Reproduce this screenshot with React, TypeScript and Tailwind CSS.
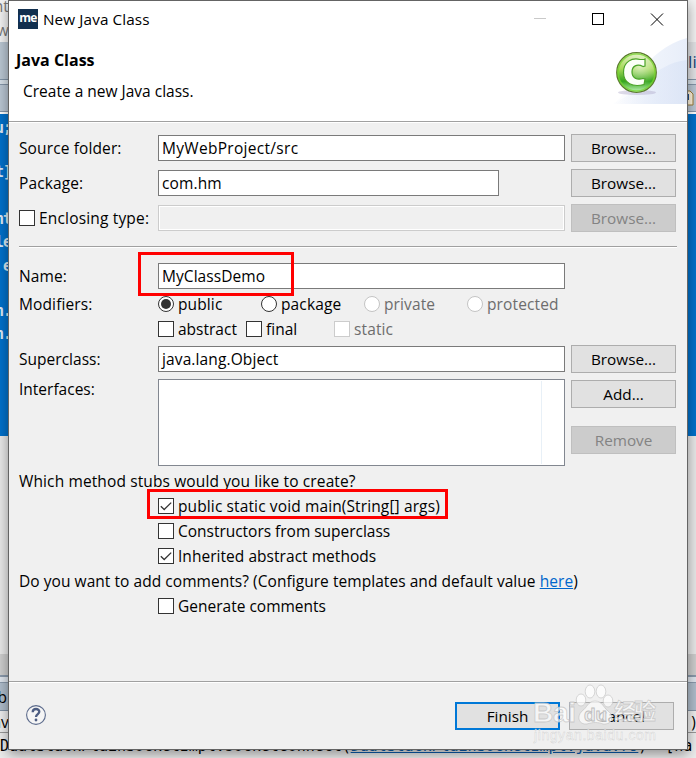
import type { ReactNode } from 'react'
import clsx from 'clsx'

function Label({ children, className }: { children: ReactNode; className?: string }) {
  return <span className={clsx('whitespace-nowrap', className)}>{children}</span>
}

function Field({ value, className }: { value?: string; className?: string }) {
  return (
    <div className={clsx('flex h-[26px] items-center border border-[#7a7a7a] bg-white pl-[3px]', className)}>
      {value}
    </div>
  )
}

function Button({ label, disabled, primary }: { label: string; disabled?: boolean; primary?: boolean }) {
  return (
    <button
      className={clsx(
        'flex h-7 w-[105px] items-center justify-center text-[15.3px] tracking-normal',
        disabled && 'border border-[#bfbfbf] bg-[#cccccc] text-[#838383]',
        primary && 'border-2 border-[#0078d7] bg-[#e1e1e1]',
        !disabled && !primary && 'border border-[#adadad] bg-[#e1e1e1]'
      )}
    >
      {label}
    </button>
  )
}

type CheckboxProps = { label: string; checked?: boolean; disabled?: boolean; className?: string }

function Checkbox({ label, checked, disabled, className }: CheckboxProps) {
  return (
    <div className={clsx('flex h-[25px] items-center gap-1', disabled && 'text-[#6d6d6d]', className)}>
      <span className={clsx('h-4 w-4 shrink-0 border bg-white', disabled ? 'border-[#cccccc]' : 'border-[#333333]')}>
        {checked && (
          <svg viewBox="0 0 14 14" className="h-3.5 w-3.5">
            <path d="M1.8 7.2 L5.2 10.500 L12.200 3.600" fill="none" stroke="#333" strokeWidth="1.3" />
          </svg>
        )}
      </span>
      <Label>{label}</Label>
    </div>
  )
}

function Radio({ label, checked, disabled }: { label: string; checked?: boolean; disabled?: boolean }) {
  return (
    <div className={clsx('flex w-[103px] items-center gap-1', disabled && 'text-[#6d6d6d]')}>
      <span
        className={clsx(
          'flex h-4 w-4 shrink-0 items-center justify-center rounded-full border bg-white',
          disabled ? 'border-[#c4c4c4]' : 'border-[#333333]'
        )}
      >
        {checked && <span className="h-2.5 w-2.5 rounded-full bg-[#333333]" />}
      </span>
      <Label>{label}</Label>
    </div>
  )
}

function Separator({ className }: { className?: string }) {
  return <div className={clsx('h-0.5 border-t border-b border-t-[#a0a0a0] border-b-white', className)} />
}

function ClassBanner() {
  return (
    <svg viewBox="0 0 75 67" className="h-[67px] w-[75px]">
      <defs>
        <linearGradient id="wave" x1="0" x2="1">
          <stop offset="0" stopColor="#dde6f7" stopOpacity="0" />
          <stop offset="0.65" stopColor="#dde6f7" stopOpacity="0.85" />
          <stop offset="1" stopColor="#d8e2f5" />
        </linearGradient>
        <linearGradient id="ball" x1="0" y1="0" x2="0" y2="1">
          <stop offset="0" stopColor="#e0efc0" />
          <stop offset="0.4" stopColor="#a5d957" />
          <stop offset="0.72" stopColor="#35a51d" />
          <stop offset="0.9" stopColor="#91d982" />
          <stop offset="1" stopColor="#c4f7bb" />
        </linearGradient>
        <radialGradient id="shine" cx="0.6" cy="0.35" r="0.5">
          <stop offset="0" stopColor="#fff" stopOpacity="0.55" />
          <stop offset="1" stopColor="#fff" stopOpacity="0" />
        </radialGradient>
      </defs>
      <path d="M0 67 C18 58 32 12 75 1 V67 Z" fill="url(#wave)" opacity="0.6" />
      <path d="M0 67 C30 55 40 27 75 23 V67 Z" fill="url(#wave)" opacity="0.7" />
      <ellipse cx="25" cy="55.500" rx="19" ry="2.5" fill="#aaa3c5" opacity="0.4" />
      <circle cx="24.500" cy="35.500" r="19.800" fill="url(#ball)" stroke="#5c7b2f" strokeWidth="1.2" />
      <circle cx="24.500" cy="35.500" r="18.500" fill="none" stroke="#76d62f" strokeWidth="1.4" opacity="0.75" />
      <circle cx="24.500" cy="35.500" r="18" fill="url(#shine)" />
      <path
        d="M32 22.500 L33 22 V29 L31 29.500 C25 26.500 20 29 20 35 C20 41 25 43.500 31 41.500 L33 42 L32 47.500 C21 50.500 11.500 46.500 11.500 35.500 C11.500 24.500 20 20.500 28 22.500 Z"
        fill="#fbfff7"
        stroke="#4aa326"
        strokeWidth="1.2"
      />
    </svg>
  )
}

function TitleBar() {
  return (
    <div className="flex h-9 items-center pl-[9px] text-[15.3px] tracking-[0.1px]">
      <span className="flex h-5 w-5 items-center justify-center bg-[#12304f] pb-0.5 text-[12px] font-bold tracking-[-0.8px] text-white">
        me
      </span>
      <span className="ml-[5px]">New Java Class</span>
      <svg viewBox="0 0 130 13" className="mt-px mr-[23px] ml-auto h-[13px] w-[130px]" shapeRendering="crispEdges">
        <path d="M0 5.500 H12" stroke="#c9c9c9" />
        <rect x="58.500" y="0.500" width="11" height="11" fill="none" stroke="#000" />
        <path d="M117 0.500 L129 12.500 M129 0.500 L117 12.500" stroke="#000" shapeRendering="auto" />
      </svg>
    </div>
  )
}

function Header() {
  return (
    <div className="flex h-[84px] justify-between">
      <div>
        <div className="mt-[9px] ml-[7px] h-7 text-[16px] leading-7 font-bold tracking-normal">Java Class</div>
        <div className="mt-[3px] ml-[14px] h-7 leading-7 tracking-normal">Create a new Java class.</div>
      </div>
      <ClassBanner />
    </div>
  )
}

function Watermark() {
  return (
    <div className="absolute top-[682px] left-[524px] h-16 w-[130px] font-['Liberation_Sans','Noto_Sans_CJK_SC',sans-serif] tracking-normal">
      <svg viewBox="0 0 130 64" className="h-16 w-[130px]">
        <g fill="#ffffff" fillOpacity="0.7" stroke="#c0c0c0" strokeWidth="0.8" strokeOpacity="0.75">
          <ellipse cx="48" cy="17" rx="4.800" ry="6" />
          <ellipse cx="57" cy="8.500" rx="4.800" ry="6.500" />
          <ellipse cx="68" cy="8.500" rx="4.800" ry="6.500" />
          <ellipse cx="75" cy="18" rx="4.800" ry="6" />
          <path d="M62 18 C55 18 54 25 49 28 C43 34 46 42 54 41 C60 39 65 39 70 41 C79 42 82 33 75 28 C70 24 69 18 62 18 Z" />
          <text x="0" y="39" fontSize="28" fontWeight="bold" textLength="43">Bai</text>
          <text x="81" y="36" fontSize="22" fontWeight="bold" textLength="42">经验</text>
          <text x="1" y="57" fontSize="14" textLength="122" strokeWidth="0.4">jingyan.baidu.com</text>
        </g>
        <text x="51" y="38" fontSize="19" fontWeight="bold" fill="#eeeeee" stroke="#bcbcbc" strokeWidth="0.8" textLength="23">du</text>
      </svg>
    </div>
  )
}

// what shows of the IDE on one side of the dialog
function IdeStrip({ side }: { side: 'left' | 'right' }) {
  const left = side === 'left'
  const code = [
    [4, 'u;'],
    [48, 't]'],
    [95, 'nt'],
    [118, 'le'],
    [142, 'e'],
    [187, 'n.'],
    [210, 'n.'],
  ] as const
  return (
    <div className="flex w-[9px] flex-col overflow-hidden">
      <div className="flex h-[42px] flex-col items-end justify-between bg-[#f3f3f3] pb-0.5 text-[#777]">
        {left && (
          <>
            <span className="h-4 leading-3">nt</span>
            <span className="h-4 leading-3">ow</span>
          </>
        )}
      </div>
      <div className={clsx('h-[38px] border-b border-[#8295a8]', left ? 'bg-[#b9c6d2]' : 'bg-[#e2e3e5]')}>
        {!left && <div className="pt-2.5 pl-px text-[17px] text-[#174577]">li</div>}
      </div>
      <div className="h-1 bg-[#d7e0e8]" />
      <div className="h-[28px] border-t border-b border-[#8495a8] bg-[#b9c6d3]">
        {!left && (
          <svg viewBox="0 0 9 26" className="h-[26px] w-[9px]">
            <path d="M-2 6 H3 L6 9 V20 H-2" fill="#fff4dc" stroke="#9b7a36" />
            <path d="M1 9 V15" stroke="#204f8d" strokeWidth="2" />
          </svg>
        )}
      </div>
      <div className="h-0.5 bg-white" />
      <div className="relative h-[322px] bg-[#0070ca] font-['DejaVu_Sans_Mono','Liberation_Mono',monospace] text-[15px] font-bold tracking-normal text-[#dce9f5]">
        {left &&
          code.map(([top, text]) => (
            <span key={top} className="absolute -right-0.5 tracking-[-1px]" style={{ top }}>
              {text}
            </span>
          ))}
      </div>
      <div className="h-[218px] bg-[#e9e9e9]" />
      <div className="h-[21px] bg-[#cecece]" />
      <div className="h-2 border-t-2 border-b border-[#8b9aac] bg-[#dfe5ed]" />
      <div className="flex h-[28px] items-center justify-end border-b border-[#8091a4] bg-[#afbdcb] pr-0.5">{left && 'b'}</div>
      <div className="flex h-[22px] items-center justify-end border-b border-[#999] bg-[#eeeeee]">{left ? 'av' : ')'}</div>
    </div>
  )
}

function IdeBackground() {
  return (
    <div className="flex h-full flex-col bg-[#ececec]">
      <div className="flex h-[733px] justify-between">
        <IdeStrip side="left" />
        <IdeStrip side="right" />
      </div>
      <div className="h-[25px] overflow-hidden font-['DejaVu_Sans_Mono','Liberation_Mono',monospace] text-[15px] leading-[27px] tracking-[-0.04px] whitespace-pre">
        <span>DualStackPlainSocketImpl.socketConnect(</span>
        <span className="text-[#0b5cad] underline">DualStackPlainSocketImpl.java:79</span>
        <span>)  [na</span>
      </div>
    </div>
  )
}

function Dialog() {
  return (
    <div className="absolute top-0 left-2 flex h-[750px] w-[680px] flex-col border border-[#646464] bg-[#f0f0f0] shadow-[0_4px_12px_rgba(0,0,0,0.4)]">
      <div className="bg-white">
        <TitleBar />
        <Header />
      </div>
      <Separator />

      <div className="flex h-[558px] flex-col pt-[11px] pr-[9px] pl-2.5">
        <div className="flex h-7 items-center">
          <Label className="w-[139px]">Source folder:</Label>
          <Field value="MyWebProject/src" className="mr-1.5 w-[407px] tracking-[0.3px]" />
          <Button label="Browse..." />
        </div>
        <div className="mt-[7px] flex h-7 items-center">
          <Label className="w-[139px]">Package:</Label>
          <Field value="com.hm" className="mr-[72px] w-[341px]" />
          <Button label="Browse..." />
        </div>
        <div className="mt-[7px] flex h-7 items-center">
          <div className="w-[139px]">
            <Checkbox label="Enclosing type:" className="tracking-[0.17px]" />
          </div>
          <div className="mr-1.5 h-[26px] w-[407px] border border-[#cccccc] bg-[#f0f0f0] outline -outline-offset-2 outline-white" />
          <Button label="Browse..." disabled />
        </div>
        <Separator className="mt-3.5 mr-px" />

        <div className="mt-[15px] flex h-[26px] items-center">
          <Label className="w-[139px]">Name:</Label>
          <Field value="MyClassDemo" className="w-[407px] tracking-[0.06px]" />
        </div>
        <div className="mt-0.5 flex h-[25px] items-center">
          <Label className="w-[139px]">Modifiers:</Label>
          <Radio label="public" checked />
          <Radio label="package" />
          <Radio label="private" disabled />
          <Radio label="protected" disabled />
        </div>
        <div className="ml-[139px] flex h-[25px]">
          <div className="w-[88px]">
            <Checkbox label="abstract" className="tracking-normal" />
          </div>
          <div className="w-[88px]">
            <Checkbox label="final" className="tracking-normal" />
          </div>
          <Checkbox label="static" disabled />
        </div>
        <div className="mt-1 flex h-7 items-center">
          <Label className="w-[139px] tracking-[0.02px]">Superclass:</Label>
          <Field value="java.lang.Object" className="mr-1.5 w-[407px]" />
          <Button label="Browse..." />
        </div>
        <div className="mt-1.5 flex h-[87px]">
          <Label className="w-[139px] leading-[21px] tracking-normal">Interfaces:</Label>
          <div className="mr-1.5 flex w-[407px] justify-end border border-[#828790] bg-white py-px">
            <div className="w-[23px] border-l border-[#e8f0f7]" />
          </div>
          <div className="flex flex-col gap-[18px] pt-px">
            <Button label="Add..." />
            <Button label="Remove" disabled />
          </div>
        </div>

        <Label className="mt-[3px] h-6 leading-[25px]">Which method stubs would you like to create?</Label>
        <div className="ml-[139px]">
          <Checkbox label="public static void main(String[] args)" checked />
          <Checkbox label="Constructors from superclass" className="tracking-[-0.02px]" />
          <Checkbox label="Inherited abstract methods" className="tracking-[0.04px]" checked />
        </div>
        <Label className="h-[25px] leading-[26px] tracking-[0.05px]">
          Do you want to add comments? (Configure templates and default value{' '}
          <a className="text-[#0066cc] underline">here</a>)
        </Label>
        <div className="ml-[139px]">
          <Checkbox label="Generate comments" className="tracking-normal" />
        </div>
      </div>

      <Separator />
      <div className="flex items-start pt-[19px] pr-[13px] pl-[17px]">
        <svg viewBox="0 0 20 20" className="mt-[3px] h-5 w-5">
          <circle cx="10" cy="10" r="9.400" fill="#f5f5f5" stroke="#5c6b8c" strokeWidth="1.100" />
          <path d="M6.700 7.300 C6.700 2.800 13.300 3.200 13.300 6.800 C13.300 9 10 9.200 10 12" fill="none" stroke="#4d5d82" strokeWidth="2.300" />
          <circle cx="10" cy="15" r="1.400" fill="#4d5d82" />
        </svg>
        <div className="ml-auto flex gap-[9px]">
          <Button label="Finish" primary />
          <Button label="Cancel" />
        </div>
      </div>

      <div className="absolute top-[251px] left-[129px] h-11 w-[156px] border-3 border-[#ff0000]" />
      <div className="absolute top-[488px] left-[138px] h-[30px] w-[301px] border-3 border-[#ff0000]" />
      <Watermark />
    </div>
  )
}

export default function App() {
  return (
    <div className="relative h-[758px] w-[696px] overflow-hidden font-['Open_Sans','Noto_Sans',sans-serif] text-[15.5px] leading-5 tracking-[0.12px] text-black">
      <IdeBackground />
      <Dialog />
    </div>
  )
}
